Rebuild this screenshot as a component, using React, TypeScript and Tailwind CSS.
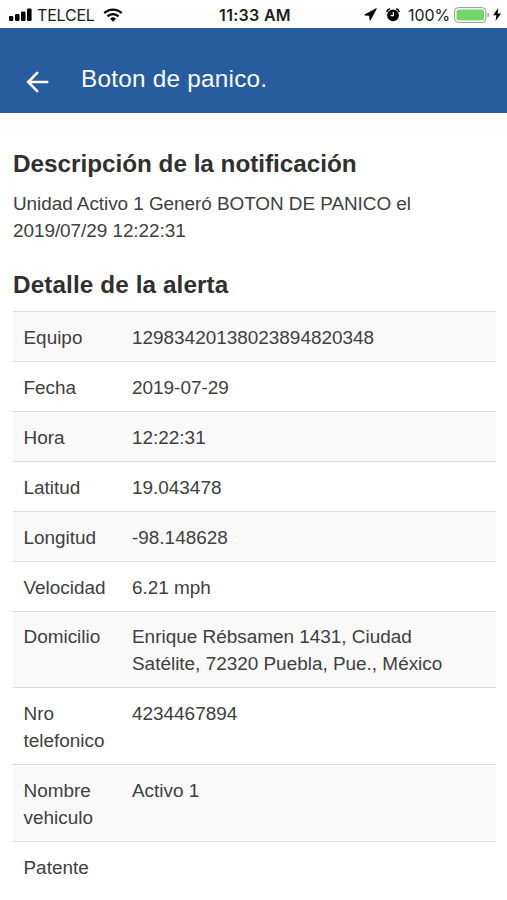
const details = [
  { label: 'Equipo', value: '12983420138023894820348' },
  { label: 'Fecha', value: '2019-07-29' },
  { label: 'Hora', value: '12:22:31' },
  { label: 'Latitud', value: '19.043478' },
  { label: 'Longitud', value: '-98.148628' },
  { label: 'Velocidad', value: '6.21 mph' },
  { label: 'Domicilio', value: 'Enrique Rébsamen 1431, Ciudad Satélite, 72320 Puebla, Pue., México' },
  { label: 'Nro telefonico', value: '4234467894' },
  { label: 'Nombre vehiculo', value: 'Activo 1' },
  { label: 'Patente', value: '' },
];

function StatusBar() {
  return (
    <div className="grid h-7 grid-cols-[1fr_auto_1fr] items-center bg-white pl-[9px] pr-[6px] pt-px font-['Inter',sans-serif] text-[#1c1c1c]">
      <div className="flex items-center">
        <svg className="mr-[5px]" width="23" height="14" viewBox="0 0 23 14" fill="#000">
          <rect x="0" y="8" width="4.3" height="5" rx="1.2" />
          <rect x="6" y="6" width="4.5" height="7" rx="1.2" />
          <rect x="12" y="3.5" width="4.5" height="9.5" rx="1.2" />
          <rect x="18" y="0.5" width="4.6" height="12.5" rx="1.2" />
        </svg>
        <span className="text-[16px] leading-5 tracking-[-0.2px]">TELCEL</span>
        <svg className="ml-[8px]" width="20" height="14" viewBox="0 0 20 14" fill="none" stroke="#000" strokeWidth="2.3">
          <path d="M1.3 5.1a12.4 12.4 0 0 1 17.4 0" />
          <path d="M4.5 8.4a7.8 7.8 0 0 1 11 0" />
          <path d="M7 10.7a4.3 4.3 0 0 1 6 0l-3 3z" fill="#000" stroke="none" />
        </svg>
      </div>
      <span className="text-[16px] font-semibold leading-5 tracking-[0.3px]">11:33 AM</span>
      <div className="flex items-center justify-end">
        <svg className="mr-[9px]" width="13" height="13" viewBox="0 0 13 13" fill="#000" stroke="#000" strokeWidth="1" strokeLinejoin="round">
          <path d="M12.3.7.7 6.9l5 .4.4 5z" />
        </svg>
        <svg className="mr-[8px]" width="14" height="14" viewBox="0 0 14 14" fill="none">
          <circle cx="7" cy="7.3" r="5.9" fill="#000" />
          <path d="M.9 3.4A4 4 0 0 1 3.5 1M13.1 3.4A4 4 0 0 0 10.5 1" stroke="#000" strokeWidth="1.5" strokeLinecap="round" />
          <path d="M7.3 4v3.7H4.6" stroke="#fff" strokeWidth="1.2" />
        </svg>
        <span className="mr-[4px] text-[16px] leading-5 tracking-[-0.1px]">100%</span>
        <svg className="mr-[3px]" width="36" height="16" viewBox="0 0 36 16">
          <rect x=".6" y=".6" width="31.3" height="14.8" rx="3.8" fill="#fff" stroke="#999" />
          <rect x="2.5" y="2.5" width="27.5" height="11" rx="1.8" fill="#70d866" />
          <path d="M33.5 5.5c2.2.8 2.2 4.2 0 5z" fill="#999" />
        </svg>
        <svg width="8" height="13" viewBox="0 0 8 13" fill="#000">
          <path d="M5.3 0 0 7.3h3.3L2.6 13 8 5.4H4.5z" />
        </svg>
      </div>
    </div>
  );
}

function Header() {
  return (
    <header className="flex h-[84.5px] items-center bg-[#275d9e] pl-[26px] pt-[18px] text-white">
      <svg className="mt-[5px]" width="23" height="22" viewBox="0 0 23 22" fill="none" stroke="currentColor" strokeWidth="2.6" strokeLinecap="round">
        <path d="M21.2 11H2.5M11.2 1.9 2.2 11l9 9.1" />
      </svg>
      <h1 className="ml-[32px] text-[24.3px] leading-8 tracking-[0.25px]">Boton de panico.</h1>
    </header>
  );
}

export default function App() {
  return (
    <div className="h-[900px] overflow-hidden bg-white font-['Liberation_Sans',Arial,sans-serif] text-[#404040]">
      <StatusBar />
      <Header />
      <main className="pl-[13px] pr-[11px] pt-[37.5px]">
        <h2 className="text-[24.3px] font-bold leading-[27px] tracking-[-0.02px] text-[#303030]">Descripción de la notificación</h2>
        <p className="mt-[13px] w-[420px] text-[18.93px] leading-[27px] tracking-[-0.05px]">
          Unidad Activo 1 Generó BOTON DE PANICO el 2019/07/29 12:22:31
        </p>
        <h2 className="mt-[27px] text-[24.3px] font-bold leading-[27px] tracking-[0.1px] text-[#303030]">Detalle de la alerta</h2>
        <dl className="mt-[13px] text-[18.93px] leading-[27px]">
          {details.map(({ label, value }) => (
            <div
              key={label}
              className="grid grid-cols-[109px_1fr] border-t border-[#dddddd] pb-[10px] pt-[11.93px] odd:bg-[#f9f9f9]"
            >
              <dt className="pl-[10.5px] pr-[10px]">{label}</dt>
              <dd className="pl-[10px] pr-[40px]">{value}</dd>
            </div>
          ))}
        </dl>
      </main>
    </div>
  );
}
